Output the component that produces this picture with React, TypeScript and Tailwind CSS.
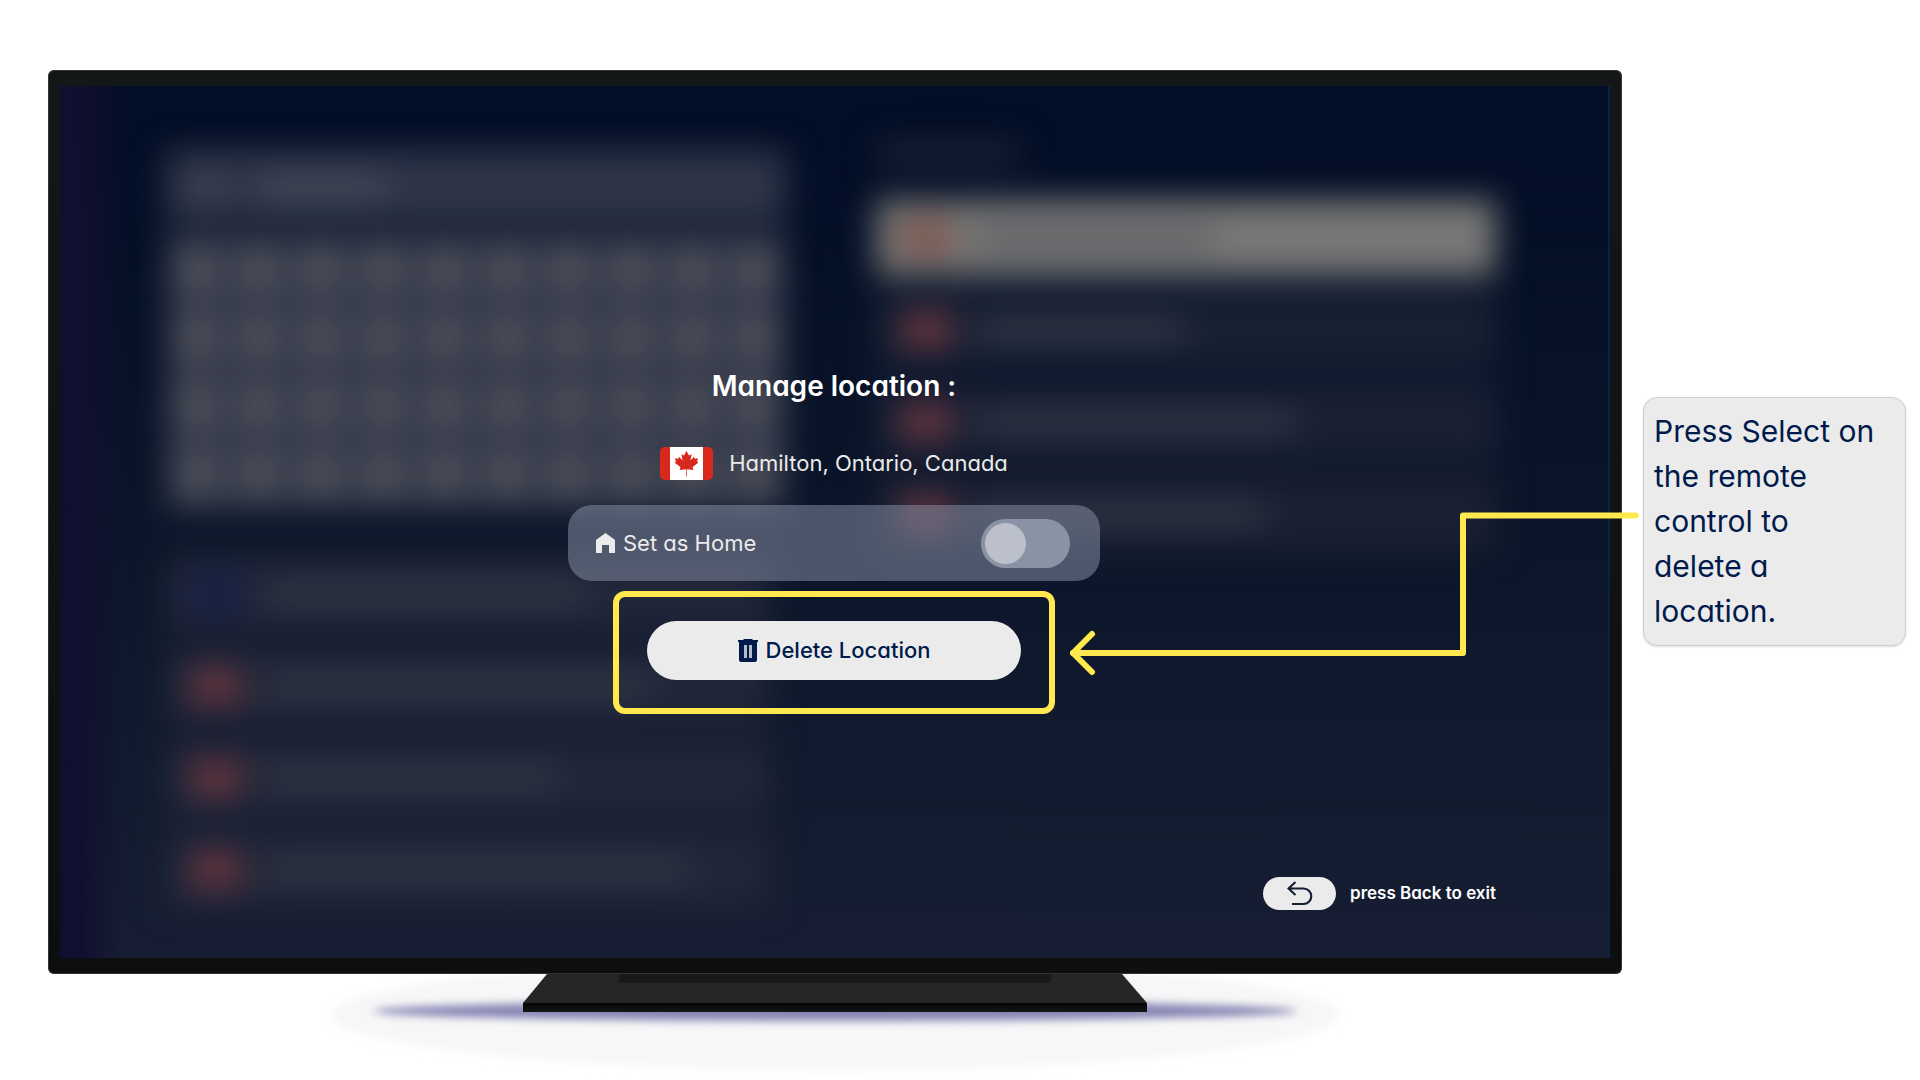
const KEYS = Array.from({ length: 40 }, (_, i) => i);

export default function App() {
  return (
    <main className="min-h-screen overflow-hidden bg-white pt-[70px] font-['Inter','Liberation_Sans',sans-serif] [font-feature-settings:'cv11']">
      <div className="flex items-center gap-[21px] pr-3.5 pl-12">
        <section className="relative min-w-0 flex-1 rounded-md bg-gradient-to-b from-[#131718] to-[#0d0e10] px-3 py-4 ring-1 ring-[#55565a]/50 ring-inset">
          <div className="relative flex aspect-video w-full flex-col overflow-hidden border-r-2 border-[#0d2147] bg-gradient-to-b from-[#020d26] via-[#0b1529] to-[#171e33]">
            <BlurredSearch />
            <ManageLocation />
            <footer className="relative mt-auto mr-28 mb-12 flex items-center justify-end gap-3.5">
              <button
                type="button"
                aria-label="Back"
                className="flex h-[33px] w-[73px] items-center justify-center rounded-full bg-[#ebebeb]"
              >
                <BackIcon />
              </button>
              <span className="text-[17px] font-semibold text-white">press Back to exit</span>
            </footer>
          </div>
          <CalloutArrow />
        </section>

        <aside className="w-[263px] shrink-0 rounded-[14px] border border-[#cfced6] bg-[#ebebeb] py-[11px] pr-6 pl-2.5 text-[30px] leading-[45px] text-[#001a4b] shadow-sm">
          <p>Press Select on the remote control to delete a location.</p>
        </aside>
      </div>

      <div className="flex justify-center pr-[298px] pl-12">
        <TvStand />
      </div>
    </main>
  );
}

function ManageLocation() {
  return (
    <div className="relative flex flex-col items-center pt-[284px]">
      <h1 className="text-[28px] leading-8 font-semibold text-white">Manage location :</h1>

      <div className="mt-[45px] flex h-[33px] items-center gap-4 text-[22px] text-[#ebebeb]">
        <CanadaFlag />
        <span>Hamilton, Ontario, Canada</span>
      </div>

      <div className="mt-[25px] flex h-[76px] w-[532px] items-center justify-between rounded-3xl bg-[#818ba1]/55 pr-[30px] pl-7">
        <label htmlFor="set-home" className="flex items-center gap-2 text-[22px] text-[#ebebeb]">
          <HomeIcon />
          Set as Home
        </label>
        <input
          id="set-home"
          type="checkbox"
          role="switch"
          className="h-[49px] w-[89px] appearance-none rounded-full bg-[#8a92a6] p-1 before:block before:size-[41px] before:rounded-full before:bg-[#bcc0cb] checked:before:ml-auto"
        />
      </div>

      <div className="mt-2.5 flex h-[123px] w-[442px] items-center justify-center rounded-xl border-6 border-[#ffe94f] pb-1">
        <button
          type="button"
          className="flex h-[59px] w-[374px] items-center justify-center gap-2 rounded-full bg-[#ebebeb] text-[22px] font-medium text-[#001a4b]"
        >
          <TrashIcon />
          Delete Location
        </button>
      </div>
    </div>
  );
}

// search screen that stays behind the dialog, out of focus
function BlurredSearch() {
  return (
    <div className="absolute inset-0" aria-hidden="true">
      <div className="absolute inset-y-0 left-0 w-16 bg-gradient-to-r from-[#110f30] from-30% to-transparent" />
      <div className="grid h-full grid-cols-2 gap-[90px] pt-16 pr-28 pl-[106px] blur-[16px]">
        <div>
          <div className="flex h-[72px] items-center gap-9 bg-[#2f3549] px-6">
            <div className="size-8 bg-[#3d4251]" />
            <div className="h-6 w-32 bg-[#434957]" />
          </div>
          <div className="mt-3 grid grid-cols-10 gap-x-6 gap-y-6 bg-[#33384a] px-3 py-3.5">
            {KEYS.map((key) => (
              <div key={key} className="h-11 bg-[#50525a]" />
            ))}
          </div>
          <div className="mt-[46px] mr-4 flex flex-col gap-4">
            <Row flag="bg-[#17204a]" bar="w-80" />
            <Row bar="w-96" />
            <Row bar="w-72" />
            <Row bar="w-[420px]" />
          </div>
        </div>
        <div>
          <div className="-mt-2 h-6 w-36 bg-[#192335]" />
          <div className="mt-[34px] flex flex-col gap-4">
            <Row row="bg-[#797876]" flag="bg-[#80574f]" bar="w-60" barColor="bg-[#5b5e65]" />
            <Row row="bg-[#182033]" bar="w-52" />
            <Row row="bg-[#1a2034]" bar="w-80" />
            <Row row="bg-[#1b2033]" bar="w-72" />
          </div>
        </div>
      </div>
    </div>
  );
}

function Row({
  bar,
  row = "bg-[#212639]",
  flag = "bg-[#65353e]",
  barColor = "bg-[#353a48]",
}: {
  bar: string;
  row?: string;
  flag?: string;
  barColor?: string;
}) {
  return (
    <div className={`flex h-[76px] items-center gap-6 px-6 ${row}`}>
      <div className={`h-9 w-[52px] rounded-lg ${flag}`} />
      <div className={`h-5 ${bar} ${barColor}`} />
    </div>
  );
}

function CalloutArrow() {
  return (
    <svg
      className="pointer-events-none absolute top-[437px] -right-5"
      width="574"
      height="174"
      viewBox="1068 507 574 174"
      fill="none"
      stroke="#ffe94f"
      strokeWidth="6"
      strokeLinecap="round"
      strokeLinejoin="round"
    >
      <path d="M1636 515.500H1463V653H1073" />
      <path d="M1092 634L1073 653L1092 672" />
    </svg>
  );
}

function CanadaFlag() {
  return (
    <svg width="53" height="33" viewBox="0 0 53 33">
      <rect width="53" height="33" rx="5" fill="#d9291c" />
      <rect x="10" width="33" height="33" fill="#fff" />
      <path
        fill="#d9291c"
        d="M26.500 4l-2.500 4.400-2.600-1.200 1.200 6.200-3.500-3.600-.8 2-3.400-.6 1.100 3.400-1.500.9 5.900 4.600-.7 2.900 6.500-.7-.1 7.200h.8l-.1-7.200 6.500.7-.7-2.900 5.900-4.600-1.500-.9 1.100-3.400-3.400.6-.8-2-3.500 3.600 1.200-6.200-2.600 1.200z"
      />
    </svg>
  );
}

function HomeIcon() {
  return (
    <svg width="19" height="20" viewBox="0 0 19 20" fill="#ebebeb">
      <path d="M9.500 0L19 7v13h-6v-8H6v8H0V7z" />
    </svg>
  );
}

function TrashIcon() {
  return (
    <svg width="20" height="23" viewBox="0 0 20 23" fill="#001a4b">
      <path d="M0 1h5.500V0h9v1H20v2h-1v18a2 2 0 0 1-2 2H3a2 2 0 0 1-2-2V3H0z" />
      <path d="M6 6h3v13H6zM11 6h3v13h-3z" fill="#b4bbc9" />
    </svg>
  );
}

function BackIcon() {
  return (
    <svg width="26" height="25" viewBox="0 0 26 25" fill="none" stroke="#161f35" strokeWidth="2.2">
      <path d="M8.500 1L1.500 7.500L8.500 14M1.500 7.500H16.500a7.700 7.700 0 0 1 0 15.500H5" />
    </svg>
  );
}

function TvStand() {
  return (
    <svg width="1040" height="104" viewBox="315 974 1040 104">
      <defs>
        <filter id="soft" x="-5%" y="-100%" width="110%" height="300%">
          <feGaussianBlur stdDeviation="4" />
        </filter>
        <linearGradient id="lip" x1="0" y1="0" x2="0" y2="1">
          <stop offset="0" stopColor="#050505" />
          <stop offset="1" stopColor="#151617" />
        </linearGradient>
      </defs>
      <ellipse cx="835" cy="1015" rx="504" ry="55" fill="#f7f7f7" filter="url(#soft)" />
      <ellipse cx="835" cy="1011" rx="462" ry="10" fill="#8584b4" filter="url(#soft)" />
      <path d="M547 974H1122L1147 1003H523z" fill="#262626" />
      <rect x="619" y="974" width="432" height="9" fill="#191919" />
      <rect x="523" y="1003" width="624" height="9" fill="url(#lip)" />
    </svg>
  );
}
